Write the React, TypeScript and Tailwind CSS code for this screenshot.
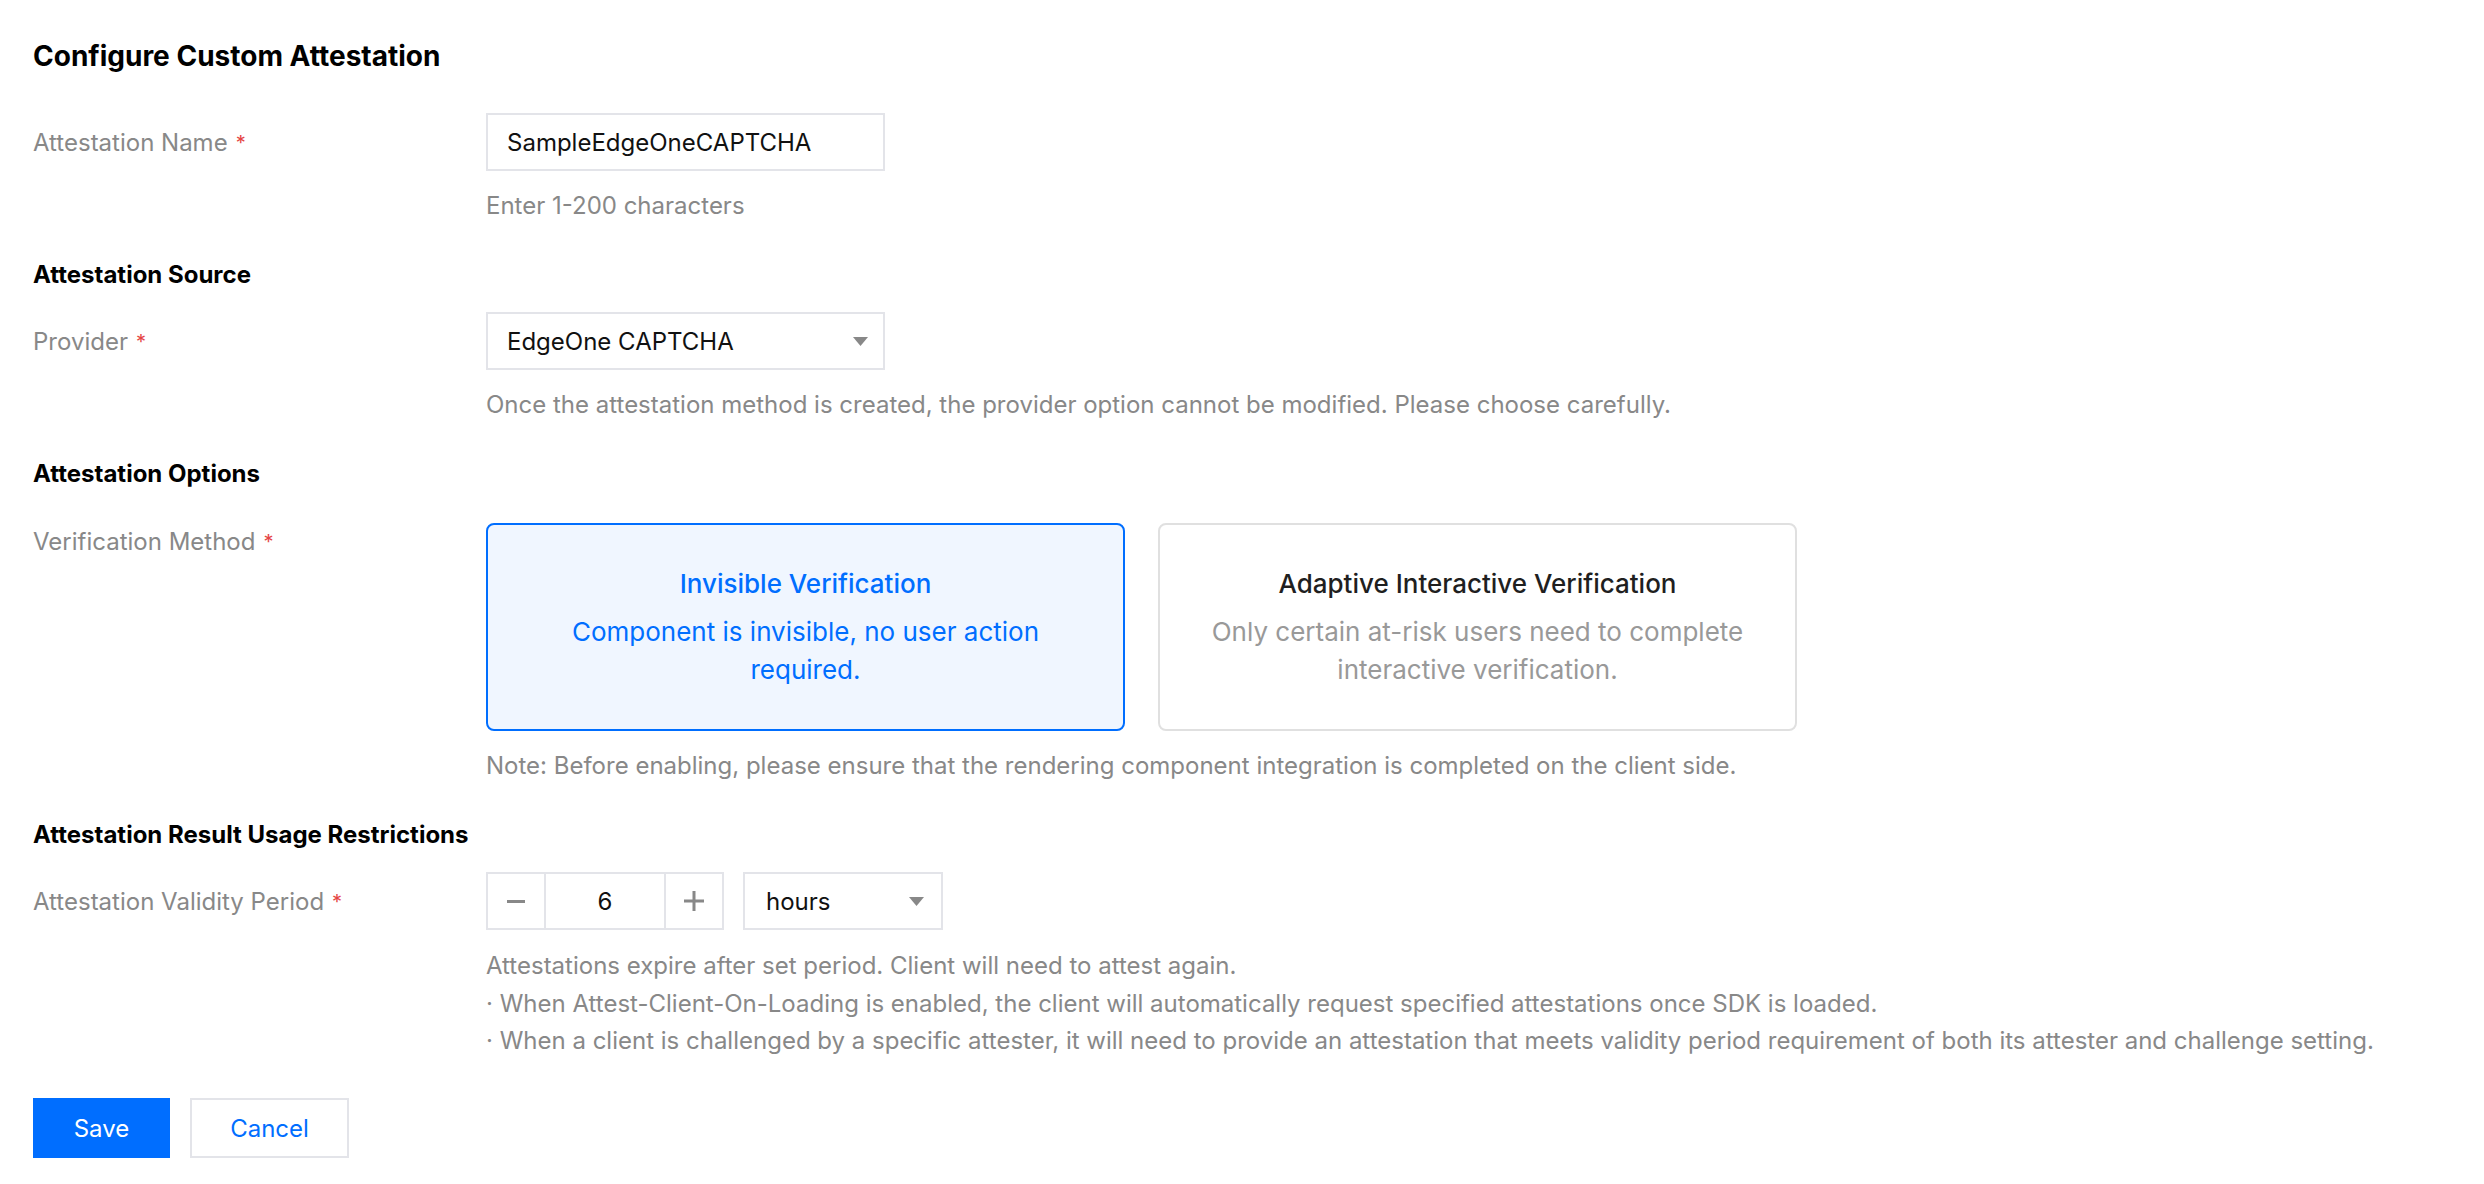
import React from 'react';

const FONT = "font-['Inter','Noto_Sans',sans-serif]";

function Label({ text, top = false }: { text: string; top?: boolean }) {
  return (
    <div className={top ? 'flex items-start pt-[1px] leading-[36px] text-[#888]' : 'flex h-[58px] items-center pt-[2px] text-[#888]'}>
      <span>{text}</span>
      <span className="ml-[8px] text-[20px] text-[#e54545]">*</span>
    </div>
  );
}

function Caret() {
  return (
    <svg width="15" height="9" viewBox="0 0 15 9" className="shrink-0">
      <path d="M0 0h15L7.5 9z" fill="#888" />
    </svg>
  );
}

function Helper({ children }: { children: React.ReactNode }) {
  return <p className="mt-[16px] pt-[1px] leading-[36px] text-[#888]">{children}</p>;
}

function SectionTitle({ children }: { children: React.ReactNode }) {
  return <h2 className="mt-[32px] pt-[1px] text-[24px] font-bold leading-[36px] text-black">{children}</h2>;
}

export default function App() {
  return (
    <div className={`min-h-screen bg-white pl-[33px] pt-[38px] text-[24px] ${FONT}`}>
      <h1 className="text-[28px] font-bold leading-[36px] text-black">Configure Custom Attestation</h1>

      {/* ── Attestation name ─────────────────────────────── */}
      <div className="mt-[39px] grid grid-cols-[453px_1fr]">
        <Label text="Attestation Name" />
        <div>
          <div className="flex h-[58px] w-[399px] items-center border-2 border-[#e3e4e9] px-[19px] pt-[2px] text-[#111]">
            SampleEdgeOneCAPTCHA
          </div>
          <Helper>Enter 1-200 characters</Helper>
        </div>
      </div>

      {/* ── Source ───────────────────────────────────────── */}
      <SectionTitle>Attestation Source</SectionTitle>
      <div className="mt-[19px] grid grid-cols-[453px_1fr]">
        <Label text="Provider" />
        <div>
          <div className="flex h-[58px] w-[399px] items-center justify-between border-2 border-[#e3e4e9] pl-[19px] pr-[15px] text-[#111]">
            <span className="pt-[2px]">EdgeOne CAPTCHA</span>
            <Caret />
          </div>
          <Helper>Once the attestation method is created, the provider option cannot be modified. Please choose carefully.</Helper>
        </div>
      </div>

      {/* ── Options ──────────────────────────────────────── */}
      <SectionTitle>Attestation Options</SectionTitle>
      <div className="mt-[31px] grid grid-cols-[453px_1fr]">
        <Label text="Verification Method" top />
        <div>
          <div className="flex gap-[33px]">
            <div className="flex h-[208px] w-[639px] flex-col items-center justify-center rounded-[8px] border-2 border-[#006eff] bg-[#f0f6ff] px-[48px] text-center text-[26px] text-[#006eff]">
              <p className="font-medium leading-[38px]">Invisible Verification</p>
              <p className="mt-[10px] leading-[38px]">Component is invisible, no user action required.</p>
            </div>
            <div className="flex h-[208px] w-[639px] flex-col items-center justify-center rounded-[8px] border-2 border-[#e0e0e0] bg-white px-[48px] text-center text-[26px]">
              <p className="font-medium leading-[38px] text-[#1f1f1f]">Adaptive Interactive Verification</p>
              <p className="mt-[10px] leading-[38px] text-[#999]">Only certain at-risk users need to complete interactive verification.</p>
            </div>
          </div>
          <Helper>Note: Before enabling, please ensure that the rendering component integration is completed on the client side.</Helper>
        </div>
      </div>

      {/* ── Usage restrictions ───────────────────────────── */}
      <SectionTitle>Attestation Result Usage Restrictions</SectionTitle>
      <div className="mt-[19px] grid grid-cols-[453px_1fr]">
        <Label text="Attestation Validity Period" />
        <div>
          <div className="flex gap-[19px]">
            <div className="flex h-[58px] w-[238px] border-2 border-[#e3e4e9]">
              <button className="flex w-[58px] items-center justify-center border-r-2 border-[#e3e4e9]">
                <span className="block h-[3px] w-[18px] bg-[#888]" />
              </button>
              <div className="flex flex-1 items-center justify-center pt-[2px] text-[#111]">6</div>
              <button className="flex w-[58px] items-center justify-center border-l-2 border-[#e3e4e9]">
                <svg width="20" height="20" viewBox="0 0 20 20">
                  <path d="M8.5 0h3v20h-3zM0 8.5h20v3H0z" fill="#888" />
                </svg>
              </button>
            </div>
            <div className="flex h-[58px] w-[200px] items-center justify-between border-2 border-[#e3e4e9] pl-[21px] pr-[17px] text-[#111]">
              <span className="pt-[2px]">hours</span>
              <Caret />
            </div>
          </div>
          <div className="mt-[16px] pt-[1px] leading-[37.5px] text-[#888]">
            <p>Attestations expire after set period. Client will need to attest again.</p>
            <p>· When Attest-Client-On-Loading is enabled, the client will automatically request specified attestations once SDK is loaded.</p>
            <p>· When a client is challenged by a specific attester, it will need to provide an attestation that meets validity period requirement of both its attester and challenge setting.</p>
          </div>
        </div>
      </div>

      {/* ── Actions ──────────────────────────────────────── */}
      <div className="mt-[38px] flex gap-[20px]">
        <button className="h-[60px] w-[137px] bg-[#006eff] pt-[2px] text-white">Save</button>
        <button className="h-[60px] w-[159px] border-2 border-[#e3e4e9] bg-white pt-[2px] text-[#006eff]">Cancel</button>
      </div>
    </div>
  );
}
